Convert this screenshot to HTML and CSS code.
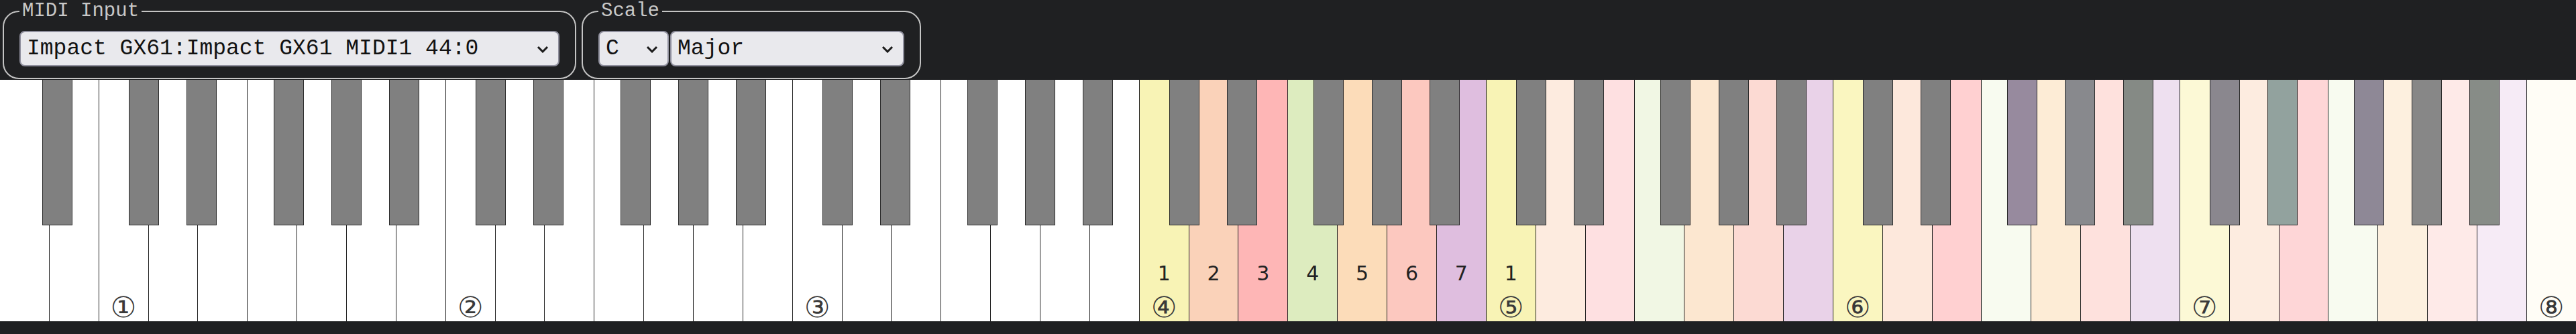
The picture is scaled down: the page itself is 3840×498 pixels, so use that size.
FILE: index.html
```html
<!DOCTYPE html>
<html>
<head>
    <title>Scale Keyboard</title>
    <link rel="stylesheet" href="styles.css">
</head>
<body>
    <header class="controls">
        <fieldset class="group">
            <legend>MIDI Input</legend>
            <div class="select-wrap midi">
                <select id="midiInput">
                    <option>Impact GX61:Impact GX61 MIDI1 44:0</option>
                </select>
                <svg class="chevron" viewBox="0 0 18 11"><polyline points="2,2 9,9 16,2"/></svg>
            </div>
        </fieldset>

        <fieldset class="group">
            <legend>Scale</legend>
            <div class="selects">
                <div class="select-wrap root">
                    <select id="rootNote">
                        <option>C</option>
                        <option>C#</option>
                        <option>D</option>
                        <option>D#</option>
                        <option>E</option>
                        <option>F</option>
                        <option>F#</option>
                        <option>G</option>
                        <option>G#</option>
                        <option>A</option>
                        <option>A#</option>
                        <option>B</option>
                    </select>
                    <svg class="chevron" viewBox="0 0 18 11"><polyline points="2,2 9,9 16,2"/></svg>
                </div>
                <div class="select-wrap mode">
                    <select id="scaleMode">
                        <option>Major</option>
                        <option>Minor</option>
                        <option>Dorian</option>
                        <option>Mixolydian</option>
                    </select>
                    <svg class="chevron" viewBox="0 0 18 11"><polyline points="2,2 9,9 16,2"/></svg>
                </div>
            </div>
        </fieldset>
    </header>

    <div class="keyboard" id="keyboard"></div>

    <script>
        const keyboard = document.getElementById('keyboard');
        const BLACK = [1, 3, 6, 8, 10]; // pitch classes of the black keys
        const CIRCLED = ['①', '②', '③', '④', '⑤', '⑥', '⑦', '⑧'];

        // colours of the white keys from C4 up to C8 (fading history)
        const whiteColors = [
            '#f8f3b5', '#fad2b9', '#feb6b6', '#ddecbf', '#fcdcb9', '#fcc8bf', '#dfbedf',
            '#f8f3b5', '#fdebdf', '#fee0e1', '#f1f7e4', '#fce7d0', '#fcdad3', '#e9d2e8',
            '#faf6c0', '#fde8dc', '#ffd0d1', '#f8fbf0', '#fdecd6', '#fee1dd', '#eee0f0',
            '#fcf9d6', '#fdece0', '#fed6d7', '#f8fbf0', '#fdf0df', '#feeae8', '#f6ebf6',
            '#fffdf6'
        ];
        const blackColors = {
            90: '#978a9e', 92: '#88898d', 94: '#858a85',
            97: '#8a878e', 99: '#92a29e', 102: '#8e8896', 104: '#878787', 106: '#878c87'
        };
        const degrees = { 60: '1', 62: '2', 64: '3', 65: '4', 67: '5', 69: '6', 71: '7', 72: '1' };

        let whiteIndex = 0;
        for (let midi = 21; midi <= 108; midi++) {
            const pc = midi % 12;
            const n = midi - 21;
            if (BLACK.includes(pc)) {
                const key = document.createElement('div');
                key.className = 'black-key';
                key.style.left = `calc(${((7 * n + 3) / 624 * 100).toFixed(4)}% + 1.5px)`;
                if (blackColors[midi]) key.style.backgroundColor = blackColors[midi];
                keyboard.appendChild(key);
                continue;
            }

            const key = document.createElement('div');
            key.className = 'white-key';
            const colorIndex = whiteIndex - 23;
            if (colorIndex >= 0) key.style.backgroundColor = whiteColors[colorIndex];

            const degree = document.createElement('span');
            degree.className = 'degree';
            degree.textContent = degrees[midi] || '';
            key.appendChild(degree);

            const octave = document.createElement('span');
            octave.className = 'octave';
            octave.textContent = pc === 0 ? CIRCLED[Math.floor(midi / 12) - 2] : '';
            key.appendChild(octave);

            keyboard.appendChild(key);
            whiteIndex++;
        }
    </script>
</body>
</html>
```

FILE: styles.css
```css
body {
    margin: 0;
    background-color: #1f2022;
    font-family: "Liberation Mono", monospace;
}

.controls {
    display: flex;
    gap: 8px;
    padding: 0 4px 1px;
}

.group {
    margin: 0;
    padding: 12px 23px 17px;
    border: 2px solid #c4c4c4;
    border-radius: 24px;
}

.group legend {
    padding: 0 4px;
    font-size: 29px;
    line-height: 34px;
    color: #c8c8c8;
}

.selects {
    display: flex;
    gap: 2px;
}

.select-wrap {
    position: relative;
}

.select-wrap select {
    appearance: none;
    -webkit-appearance: none;
    height: 53px;
    margin: 0;
    padding: 0 0 0 9px;
    border: 2px solid #8f8f9d;
    border-radius: 8px;
    background-color: #e9e9ed;
    color: #111;
    font-family: "Liberation Mono", monospace;
    font-size: 33px;
}

.midi select {
    width: 805px;
}

.root select {
    width: 105px;
}

.mode select {
    width: 349px;
}

.chevron {
    position: absolute;
    top: 22px;
    right: 16px;
    width: 18px;
    height: 11px;
    pointer-events: none;
    fill: none;
    stroke: #1a1a1a;
    stroke-width: 3;
}

.keyboard {
    position: relative;
    display: flex;
    height: 360px;
    background-color: #fff;
}

.white-key {
    flex: 1;
    display: flex;
    flex-direction: column;
    justify-content: flex-end;
    align-items: center;
    padding-bottom: 1px;
    border-right: 1px solid #222;
    background-color: #fff;
    font-family: "DejaVu Sans", sans-serif;
}

.white-key:last-child {
    border-right: none;
}

.degree {
    height: 36px;
    margin-bottom: 12px;
    font-size: 30px;
    line-height: 36px;
    color: #222;
}

.octave {
    height: 40px;
    font-size: 43px;
    line-height: 40px;
    color: #3a3a3a;
}

.black-key {
    position: absolute;
    top: 0;
    width: 45px;
    height: 217px;
    box-sizing: border-box;
    border: 1px solid #2b2b2b;
    border-top: none;
    background-color: #808080;
}
```
